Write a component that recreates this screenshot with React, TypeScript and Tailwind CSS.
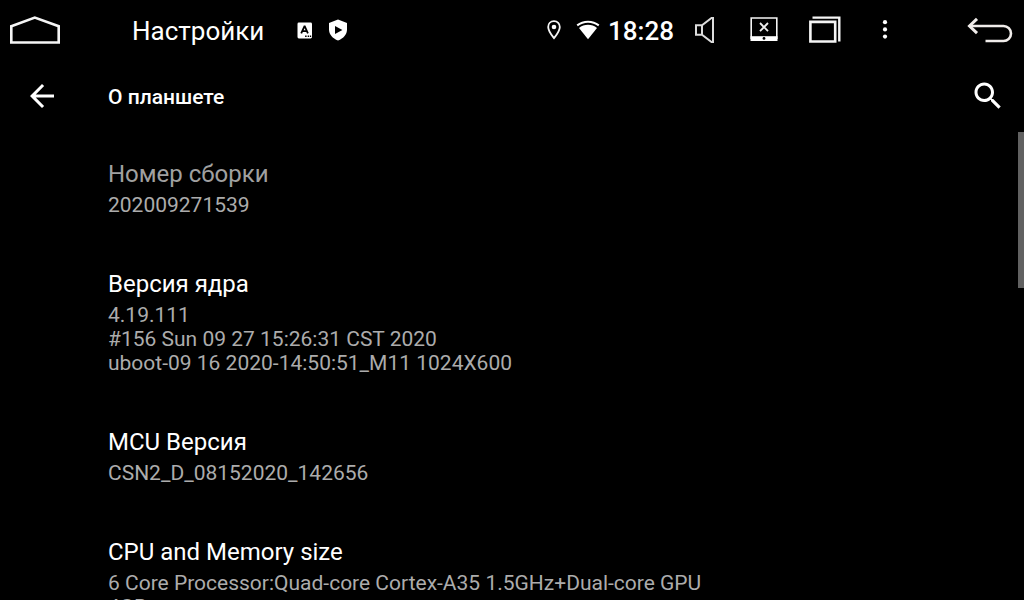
import React from "react";

interface InfoEntry {
  title: string;
  lines: string[];
  disabled?: boolean;
}

const entries: InfoEntry[] = [
  { title: "Номер сборки", lines: ["202009271539"], disabled: true },
  {
    title: "Версия ядра",
    lines: [
      "4.19.111",
      "#156 Sun 09 27 15:26:31 CST 2020",
      "uboot-09 16 2020-14:50:51_M11 1024X600",
    ],
  },
  { title: "MCU Версия", lines: ["CSN2_D_08152020_142656"] },
  {
    title: "CPU and Memory size",
    lines: ["6 Core Processor:Quad-core Cortex-A35 1.5GHz+Dual-core GPU", "4GB"],
  },
];

function HomeIcon() {
  return (
    <svg width="52" height="30" viewBox="0 0 52 30" fill="none" stroke="#f5f5f5" strokeWidth="2.6">
      <path d="M2.3 11.2 25.8 2.6 49.7 11.2V27.5H2.3Z" />
    </svg>
  );
}

function LanguageIcon() {
  return (
    <svg width="16" height="18" viewBox="0 0 16 18">
      <rect x="0.5" y="1.5" width="14.5" height="16" rx="1.4" fill="#fff" />
      <path d="M4.2 12.4 7.4 5.4h.4l3.1 7M5.4 10.2h4.3" fill="none" stroke="#000" strokeWidth="1.8" />
      <path d="M8.1 14.5h1.5v1.5H8.1zM10.7 14.5h1.5v1.5h-1.5zM13 14.5h1.2v1.5H13z" fill="#000" />
    </svg>
  );
}

function ShieldIcon() {
  return (
    <svg width="20" height="22" viewBox="0 0 20 22">
      <path d="M10 .6 19 4v6.4c0 4.8-3.5 8.9-9 11.1C4.5 19.3 1 15.2 1 10.4V4Z" fill="#fff" />
      <path d="M7 7v8l7.4-4Z" fill="#000" />
    </svg>
  );
}

function PinIcon() {
  return (
    <svg width="16" height="20" viewBox="0 0 16 20">
      <path
        d="M8 1.1C4.5 1.1 2.2 3.6 2.2 6.9c0 4.1 3.7 8.4 5.8 11.2 2.1-2.8 5.8-7.1 5.8-11.2 0-3.3-2.3-5.8-5.8-5.8Z"
        fill="none"
        stroke="#f5f5f5"
        strokeWidth="1.8"
      />
      <circle cx="8" cy="7" r="2.3" fill="#fff" />
    </svg>
  );
}

function WifiIcon() {
  return (
    <svg width="24" height="20" viewBox="0 0 24 20">
      <path d="M1.2 5.4C7.5.4 16.5.4 22.8 5.4" fill="none" stroke="#fff" strokeWidth="2" />
      <path d="M12 19.2 3 8C8 3.8 16 3.8 21 8Z" fill="#fff" />
    </svg>
  );
}

function VolumeIcon() {
  return (
    <svg width="22" height="28" viewBox="0 0 22 28" fill="none" stroke="#dcdcdc" strokeWidth="2">
      <path d="M2 9.2H8L17.5 2H19V26H17.5L8 18.8H2ZM8 9.2v9.6" />
    </svg>
  );
}

function ScreenOffIcon() {
  return (
    <svg width="28" height="26" viewBox="0 0 28 26">
      <path d="M1.2 22V1H26.8V22" fill="none" stroke="#f5f5f5" strokeWidth="1.6" />
      <path d="M.5 19.2H27.5v4.8H.5Z" fill="#fff" />
      <path d="m10 6 8 8.2m0-8.2-8 8.2" stroke="#eee" strokeWidth="1.8" />
      <circle cx="14" cy="21.4" r="1.4" fill="#000" />
    </svg>
  );
}

function WindowsIcon() {
  return (
    <svg width="34" height="28" viewBox="0 0 34 28" fill="none" stroke="#f5f5f5">
      <path d="M4.5 1.6H31.3V25.5" strokeWidth="2.4" />
      <path d="M2.4 5.9H27.2V25.5H2.4Z" strokeWidth="2.6" />
    </svg>
  );
}

function MoreIcon() {
  return (
    <svg width="8" height="20" viewBox="0 0 8 20" fill="#fff">
      <circle cx="4" cy="2.2" r="2.1" />
      <circle cx="4" cy="9.4" r="2.1" />
      <circle cx="4" cy="16.6" r="2.1" />
    </svg>
  );
}

function ReturnIcon() {
  return (
    <svg width="46" height="26" viewBox="0 0 46 26" fill="none" stroke="#f0ecea" strokeWidth="2.6">
      <path d="M2.5 9H36.5a7.5 7.5 0 0 1 0 15H18.5" />
      <path d="m10 1.8-7.5 7.2 7.5 7.2" strokeWidth="3" />
    </svg>
  );
}

function StatusBar() {
  return (
    <header className="flex h-[60px] shrink-0 items-center pr-[11px] pl-[9px]">
      <button aria-label="Home">
        <HomeIcon />
      </button>
      <span className="ml-[71px] pt-0.5 text-[26px] leading-8">Настройки</span>
      <div className="ml-[33px] flex items-center gap-[15px]">
        <LanguageIcon />
        <ShieldIcon />
      </div>
      <div className="ml-auto flex items-center">
        <PinIcon />
        <span className="ml-[14px]">
          <WifiIcon />
        </span>
        <time className="ml-2 pt-0.5 text-[26px] leading-8 font-medium">18:28</time>
        <button aria-label="Volume" className="ml-5">
          <VolumeIcon />
        </button>
        <button aria-label="Screen off" className="ml-[34px]">
          <ScreenOffIcon />
        </button>
        <button aria-label="Recent apps" className="ml-[30px]">
          <WindowsIcon />
        </button>
        <button aria-label="More" className="ml-[39px]">
          <MoreIcon />
        </button>
        <button aria-label="Back" className="ml-[78px]">
          <ReturnIcon />
        </button>
      </div>
    </header>
  );
}

function Toolbar() {
  return (
    <div className="flex h-[72px] shrink-0 items-center px-[18px]">
      <button aria-label="Navigate up" className="p-1.5">
        <svg width="36" height="36" viewBox="0 0 24 24" fill="#fff">
          <path d="M20 11H7.83l5.59-5.59L12 4l-8 8 8 8 1.41-1.41L7.83 13H20v-2z" />
        </svg>
      </button>
      <h1 className="ml-[42px] pt-0.5 text-[21px] leading-7 font-medium">О планшете</h1>
      <button aria-label="Search" className="ml-auto">
        <svg width="36" height="36" viewBox="0 0 24 24" fill="#fff">
          <path d="M15.5 14h-.79l-.28-.27C15.41 12.59 16 11.11 16 9.5 16 5.91 13.09 3 9.5 3S3 5.91 3 9.5 5.91 16 9.5 16c1.61 0 3.09-.59 4.23-1.57l.27.28v.79l5 4.99L20.49 19l-4.99-5zm-6 0C7.01 14 5 11.99 5 9.5S7.01 5 9.5 5 14 7.01 14 9.5 11.99 14 9.5 14z" />
        </svg>
      </button>
    </div>
  );
}

function InfoItem({ entry }: { entry: InfoEntry }) {
  return (
    <li className="py-[26px]">
      <h2
        className={
          entry.disabled
            ? "text-2xl leading-[30px] text-[#a0a0a0]"
            : "text-2xl leading-[30px] text-white"
        }
      >
        {entry.title}
      </h2>
      <div className="mt-1 text-[21px] leading-6 text-[#acacac]">
        {entry.lines.map((line) => (
          <p key={line}>{line}</p>
        ))}
      </div>
    </li>
  );
}

export default function App() {
  return (
    <div className="flex h-screen flex-col overflow-hidden bg-black font-['Roboto',sans-serif] text-white">
      <StatusBar />
      <Toolbar />
      <main className="flex min-h-0 flex-1 overflow-hidden">
        <ul className="flex-1 pt-px pr-6 pl-[108px]">
          {entries.map((entry) => (
            <InfoItem key={entry.title} entry={entry} />
          ))}
        </ul>
        <div className="h-1/3 w-1.5 bg-[#616161]" />
      </main>
    </div>
  );
}
